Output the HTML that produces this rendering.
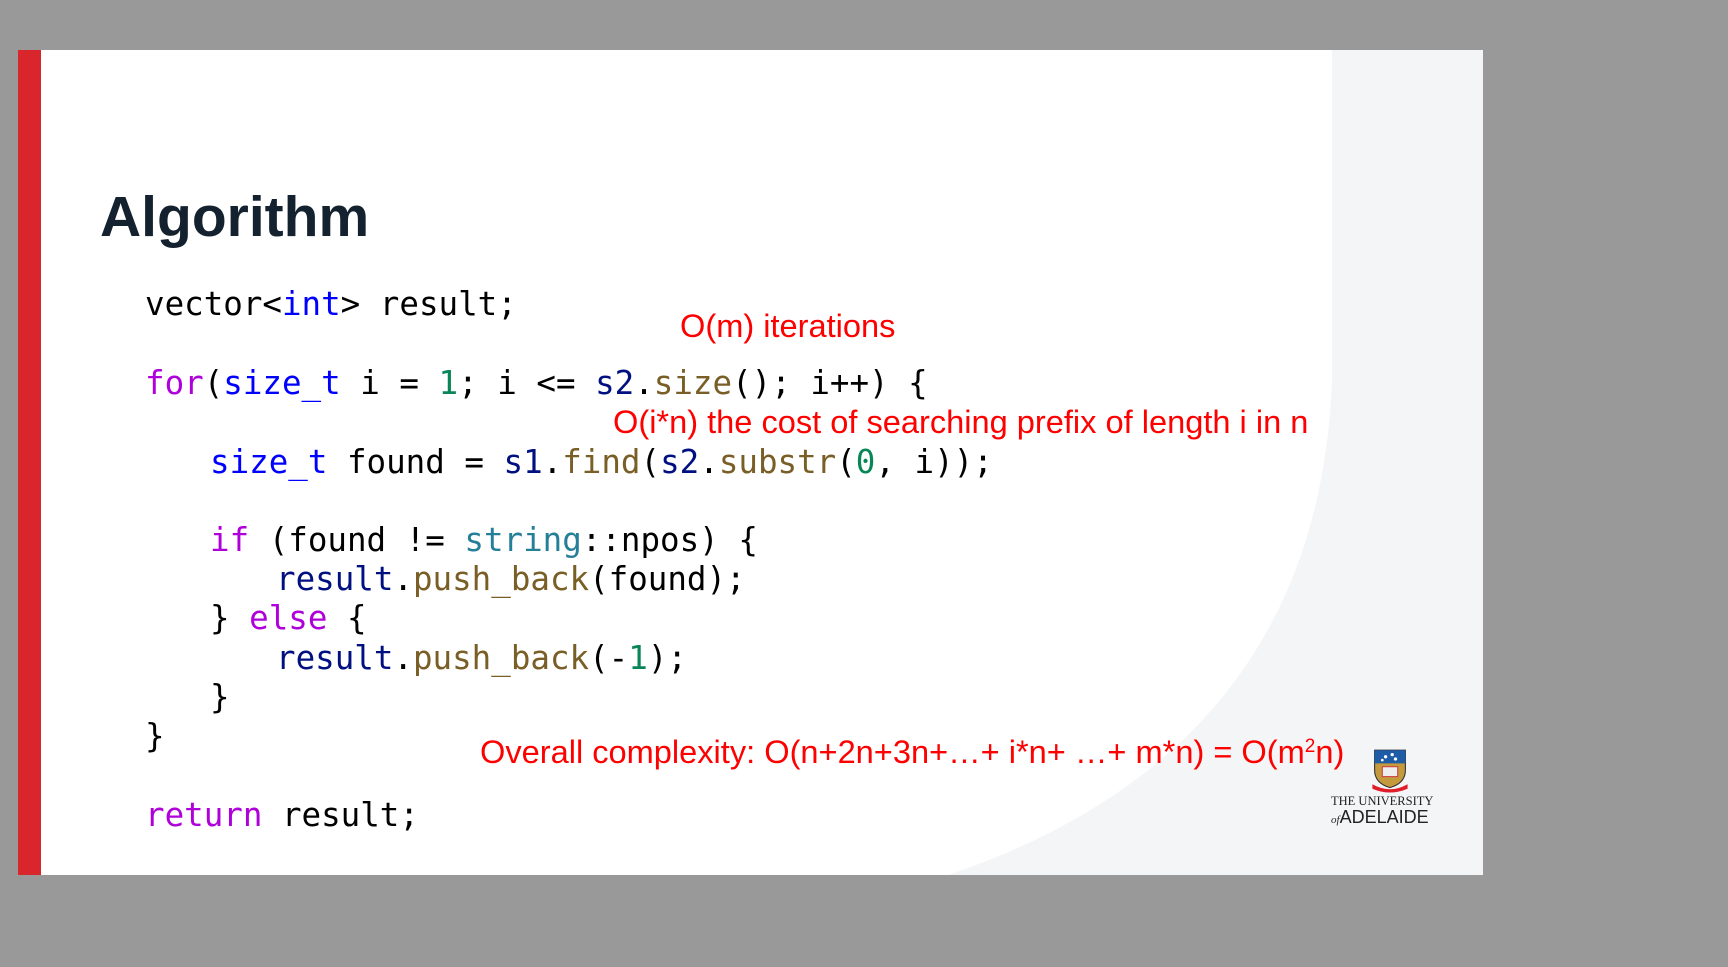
<!DOCTYPE html>
<html><head><meta charset="utf-8"><style>
html,body{margin:0;padding:0;}
body{width:1728px;height:967px;background:#999999;position:relative;overflow:hidden;font-family:"Liberation Sans",sans-serif;}
#slide{position:absolute;left:18px;top:50px;width:1465px;height:825px;background:#fff;overflow:hidden;}
#bar{position:absolute;left:0;top:0;width:23px;height:825px;background:#d8262c;}
.t{position:absolute;white-space:pre;}
h1{position:absolute;left:82px;top:139px;margin:0;font-size:57px;font-weight:bold;color:#14222f;line-height:1;}
.c{position:absolute;white-space:pre;font-family:"DejaVu Sans Mono","Liberation Mono",monospace;font-size:32.5px;color:#000;line-height:1;}
.k{color:#af00db}.ty{color:#0000ff}.s{color:#267f99}.f{color:#795e26}.v{color:#001080}.n{color:#098658}
.r{position:absolute;white-space:pre;color:#ff0000;font-size:32.6px;line-height:1;}
</style></head><body>
<div id="slide">
<svg width="1465" height="825" style="position:absolute;left:0;top:0">
<path d="M1314,0 L1314,330 Q1300,700 930,825 L1465,825 L1465,0 Z" fill="#f4f5f7"/>
</svg>
<div id="bar"></div>
<h1>Algorithm</h1>
<div class="c" style="left:127px;top:238px">vector&lt;<span class="ty">int</span>&gt; result;</div>
<div class="c" style="left:127px;top:317px"><span class="k">for</span>(<span class="ty">size_t</span> i = <span class="n">1</span>; i &lt;= <span class="v">s2</span>.<span class="f">size</span>(); i++) {</div>
<div class="c" style="left:192px;top:396px"><span class="ty">size_t</span> found = <span class="v">s1</span>.<span class="f">find</span>(<span class="v">s2</span>.<span class="f">substr</span>(<span class="n">0</span>, i));</div>
<div class="c" style="left:192px;top:474px"><span class="k">if</span> (found != <span class="s">string</span>::npos) {</div>
<div class="c" style="left:258px;top:513px"><span class="v">result</span>.<span class="f">push_back</span>(found);</div>
<div class="c" style="left:192px;top:552px">} <span class="k">else</span> {</div>
<div class="c" style="left:258px;top:592px"><span class="v">result</span>.<span class="f">push_back</span>(-<span class="n">1</span>);</div>
<div class="c" style="left:192px;top:631px">}</div>
<div class="c" style="left:127px;top:670px">}</div>
<div class="c" style="left:127px;top:749px"><span class="k">return</span> result;</div>
<div class="r" style="left:662px;top:260px">O(m) iterations</div>
<div class="r" style="left:595px;top:356px">O(i*n) the cost of searching prefix of length i in n</div>
<div class="r" style="left:462px;top:686px">Overall complexity: O(n+2n+3n+…+ i*n+ …+ m*n) = O(m<sup style="font-size:19px;vertical-align:11px;line-height:0">2</sup>n)</div>
<svg width="44" height="46" style="position:absolute;left:1350px;top:697px" viewBox="0 0 40 40">
<path d="M6,2 H34 V20 Q34,32 20,36 Q6,32 6,20 Z" fill="#c49a3c" stroke="#333" stroke-width="1"/>
<path d="M6,2 H34 V14 H6 Z" fill="#1f5ca8"/>
<circle cx="16" cy="8" r="1.5" fill="#fff"/><circle cx="22" cy="6" r="1.5" fill="#fff"/><circle cx="25" cy="10" r="1.5" fill="#fff"/><circle cx="13" cy="11" r="1.2" fill="#fff"/>
<rect x="13" y="17" width="14" height="9" fill="#eee" stroke="#c44"/>
<path d="M4,33 Q20,42 36,33 L36,37 Q20,44 4,37 Z" fill="#e01e2a"/>
</svg>
<div class="t" style="left:1313px;top:744px;font-family:'Liberation Serif',serif;font-size:12.5px;color:#222;">THE UNIVERSITY</div>
<div class="t" style="left:1313px;top:757px;font-family:'Liberation Sans',sans-serif;font-size:18px;color:#222;"><i style="font-size:11px;font-family:'Liberation Serif',serif">of</i>ADELAIDE</div>
</div>
</body></html>
